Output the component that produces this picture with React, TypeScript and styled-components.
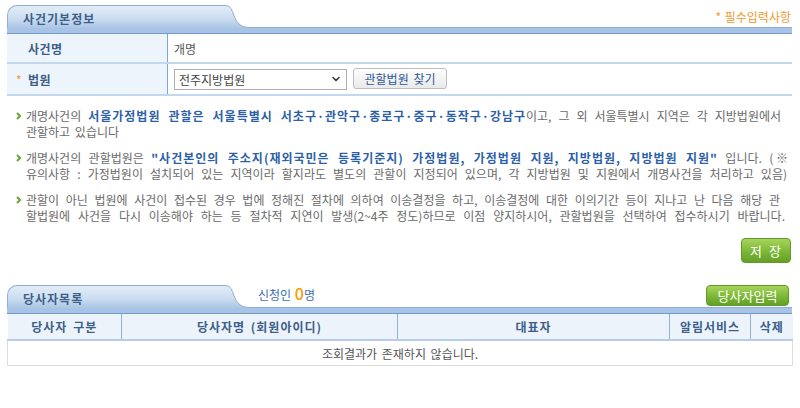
import React from "react";
import styled, { createGlobalStyle } from "styled-components";
import { ChevronDown } from "lucide-react";

const Global = createGlobalStyle`
  html, body { margin: 0; padding: 0; background: #fff; }
  body {
    font-family: "Noto Sans CJK KR", "Noto Sans", sans-serif;
    font-size: 12px;
    color: #666;
  }
`;

const Page = styled.div`
  width: 785px;
  padding: 5px 0 0 7px;
`;

/* ---------- section header ---------- */
const HeadRow = styled.div<{ $mt?: number }>`
  display: flex;
  align-items: stretch;
  height: 23px;
  margin-top: ${(p) => p.$mt ?? 0}px;
`;

const Tab = styled.div`
  width: 217px;
  height: 23px;
  box-sizing: border-box;
  border: 1px solid #8eaed3;
  border-right: none;
  border-bottom: none;
  border-top-left-radius: 10px;
  background: linear-gradient(#e2ecf7, #cddef1 55%, #abc6e5);
  display: flex;
  align-items: center;
  padding: 2px 0 0 15px;
  font-weight: bold;
  font-size: 12px;
  letter-spacing: 1px;
  color: #3d5f88;
`;

const HeadRest = styled.div<{ $align?: string }>`
  flex: 1;
  box-sizing: border-box;
  border-bottom: 1px solid #8eaed3;
  display: flex;
  justify-content: space-between;
  align-items: ${(p) => p.$align ?? "center"};
`;

const Required = styled.span`
  color: #f39a2e;
  font-size: 12px;
  padding-top: 1px;
  margin-right: 1px;
  word-spacing: 1px;
`;

const Bar = styled.div`
  height: 6px;
  box-sizing: border-box;
  background: #a7c3e6;
  border-bottom: 1px solid #7499c9;
`;

const Curve = () => (
  <svg width="28" height="23" viewBox="0 0 28 23" style={{ display: "block", flex: "none" }}>
    <defs>
      <linearGradient id="tg" x1="0" y1="0" x2="0" y2="1">
        <stop offset="0" stopColor="#e2ecf7" />
        <stop offset="0.55" stopColor="#cddef1" />
        <stop offset="1" stopColor="#abc6e5" />
      </linearGradient>
    </defs>
    <path d="M0 0.5 C6 0.5 7 3 9 8 C11 14 14 20 20 21.8 C23 22.5 25 22.5 28 22.5 L28 23 L0 23 Z" fill="url(#tg)" />
    <path d="M0 0.5 C6 0.5 7 3 9 8 C11 14 14 20 20 21.8 C23 22.5 25 22.5 28 22.5" fill="none" stroke="#8eaed3" strokeWidth="1" />
  </svg>
);

/* ---------- form ---------- */
const FormRow = styled.div<{ $h: number }>`
  display: grid;
  grid-template-columns: 161px 1fr;
  height: ${(p) => p.$h}px;
  border-bottom: 2px solid #c3d7ef;
`;

const Label = styled.div`
  background: #eef4fb;
  border-right: 1px solid #7fa6d8;
  display: flex;
  align-items: center;
  padding-left: 9px;
  font-weight: bold;
  font-size: 12px;
  letter-spacing: 0.5px;
  color: #3c5e88;
`;

const Star = styled.span<{ $show?: boolean }>`
  width: 12px;
  color: #f39a2e;
  font-weight: normal;
  visibility: ${(p) => (p.$show ? "visible" : "hidden")};
`;

const Value = styled.div`
  display: flex;
  align-items: center;
  padding-left: 6px;
  gap: 6px;
  color: #555;
`;

const SelectBox = styled.div`
  width: 173px;
  height: 21px;
  box-sizing: border-box;
  border: 1px solid #a8afb8;
  display: flex;
  align-items: center;
  justify-content: space-between;
  padding: 0 4px 0 4px;
  color: #444;
  font-size: 12px;
  background: #fff;
`;

const GrayButton = styled.button`
  height: 21px;
  width: 94px;
  box-sizing: border-box;
  border: 1px solid #bdbdbd;
  border-radius: 3px;
  background: linear-gradient(#ffffff, #e9e9e9);
  color: #2b5797;
  font-family: inherit;
  font-size: 12px;
  word-spacing: 2px;
  padding: 0;
  margin-top: -1px;
`;

/* ---------- info ---------- */
const Info = styled.div`
  padding: 12px 0 0 9px;
  display: flex;
  flex-direction: column;
  gap: 10px;
`;

const Para = styled.div`
  display: flex;
  align-items: flex-start;
`;

const ParaText = styled.div`
  margin-left: 5px;
  line-height: 16px;
  white-space: nowrap;
  color: #6a6a6a;
  word-spacing: 2px;
`;

const Line = styled.span<{ $w?: number }>`
  display: block;
  width: ${(p) => (p.$w ? `${p.$w}px` : "auto")};
  text-align: ${(p) => (p.$w ? "justify" : "left")};
  text-align-last: ${(p) => (p.$w ? "justify" : "left")};
  text-justify: inter-word;
`;

const Strong = styled.b`
  color: #2d5fa8;
  letter-spacing: 1px;
`;

const Bullet = () => (
  <svg width="5" height="8" viewBox="0 0 5 8" style={{ marginTop: 4, flex: "none" }}>
    <path d="M1 1 L4 4 L1 7" fill="none" stroke="#6aa533" strokeWidth="2" />
  </svg>
);

/* ---------- buttons ---------- */
const ButtonRow = styled.div`
  display: flex;
  justify-content: flex-end;
  margin-top: 14px;
`;

const GreenButton = styled.button<{ $w: number; $h: number }>`
  width: ${(p) => p.$w}px;
  height: ${(p) => p.$h}px;
  box-sizing: border-box;
  border: 1px solid #5f9a2c;
  border-radius: 4px;
  background: linear-gradient(#a6d45a, #78b534 60%, #64a024);
  color: #fff;
  font-family: inherit;
  font-size: 13px;
  padding: 0;
  margin-right: 1px;
  letter-spacing: 1px;
  word-spacing: 2px;
`;

const Count = styled.span`
  margin-left: 6px;
  color: #3c6fb0;
  font-size: 12px;
  line-height: 16px;
  word-spacing: 1px;
`;

const Zero = styled.span`
  color: #ff9a00;
  font-size: 16px;
  font-weight: 500;
`;

/* ---------- table ---------- */
const Table = styled.table`
  width: 785px;
  border-collapse: collapse;
  table-layout: fixed;
`;

const Th = styled.th`
  height: 25px;
  padding: 0;
  background: #edf3fa;
  border-right: 1px solid #8fb1dd;
  border-bottom: 2px solid #b5cdea;
  font-weight: bold;
  font-size: 12px;
  letter-spacing: 1px;
  word-spacing: 2px;
  color: #3b5e8c;
  &:last-child { border-right: none; }
`;

const Td = styled.td`
  height: 24px;
  padding: 0;
  border: 1px solid #dcdcdc;
  border-top: none;
  text-align: center;
  color: #555;
  word-spacing: 2px;
`;

export default function App() {
  return (
    <Page>
      <Global />
      <HeadRow>
        <Tab>사건기본정보</Tab>
        <Curve />
        <HeadRest>
          <span />
          <Required>* 필수입력사항</Required>
        </HeadRest>
      </HeadRow>
      <Bar />

      <FormRow $h={28}>
        <Label>
          <Star />
          사건명
        </Label>
        <Value>개명</Value>
      </FormRow>
      <FormRow $h={30}>
        <Label>
          <Star $show>*</Star>
          법원
        </Label>
        <Value>
          <SelectBox>
            <span>전주지방법원</span>
            <ChevronDown size={12} strokeWidth={3} color="#333" />
          </SelectBox>
          <GrayButton>관할법원 찾기</GrayButton>
        </Value>
      </FormRow>

      <Info>
        <Para>
          <Bullet />
          <ParaText>
            <Line $w={755}>
              개명사건의 <Strong>서울가정법원 관할은 서울특별시 서초구·관악구·종로구·중구·동작구·강남구</Strong>이고, 그 외 서울특별시 지역은 각 지방법원에서
            </Line>
            <Line>관할하고 있습니다</Line>
          </ParaText>
        </Para>
        <Para>
          <Bullet />
          <ParaText>
            <Line $w={762}>
              개명사건의 관할법원은 <Strong>"사건본인의 주소지(재외국민은 등록기준지) 가정법원, 가정법원 지원, 지방법원, 지방법원 지원"</Strong> 입니다. (※
            </Line>
            <Line $w={761}>
              유의사항 : 가정법원이 설치되어 있는 지역이라 할지라도 별도의 관할이 지정되어 있으며, 각 지방법원 및 지원에서 개명사건을 처리하고 있음)
            </Line>
          </ParaText>
        </Para>
        <Para>
          <Bullet />
          <ParaText>
            <Line $w={754}>
              관할이 아닌 법원에 사건이 접수된 경우 법에 정해진 절차에 의하여 이송결정을 하고, 이송결정에 대한 이의기간 등이 지나고 난 다음 해당 관
            </Line>
            <Line $w={759}>
              할법원에 사건을 다시 이송해야 하는 등 절차적 지연이 발생(2~4주 정도)하므로 이점 양지하시어, 관할법원을 선택하여 접수하시기 바랍니다.
            </Line>
          </ParaText>
        </Para>
      </Info>

      <ButtonRow>
        <GreenButton $w={50} $h={25}>저 장</GreenButton>
      </ButtonRow>

      <HeadRow $mt={22}>
        <Tab>당사자목록</Tab>
        <Curve />
        <HeadRest $align="flex-start">
          <Count>
            신청인 <Zero>0</Zero>명
          </Count>
          <GreenButton $w={83} $h={21} style={{ marginRight: 3, letterSpacing: 0 }}>
            당사자입력
          </GreenButton>
        </HeadRest>
      </HeadRow>
      <Bar />

      <Table>
        <colgroup>
          <col style={{ width: 114 }} />
          <col style={{ width: 276 }} />
          <col style={{ width: 272 }} />
          <col style={{ width: 81 }} />
          <col style={{ width: 42 }} />
        </colgroup>
        <thead>
          <tr>
            <Th>당사자 구분</Th>
            <Th>당사자명 (회원아이디)</Th>
            <Th>대표자</Th>
            <Th>알림서비스</Th>
            <Th>삭제</Th>
          </tr>
        </thead>
        <tbody>
          <tr>
            <Td colSpan={5}>조회결과가 존재하지 않습니다.</Td>
          </tr>
        </tbody>
      </Table>
    </Page>
  );
}
